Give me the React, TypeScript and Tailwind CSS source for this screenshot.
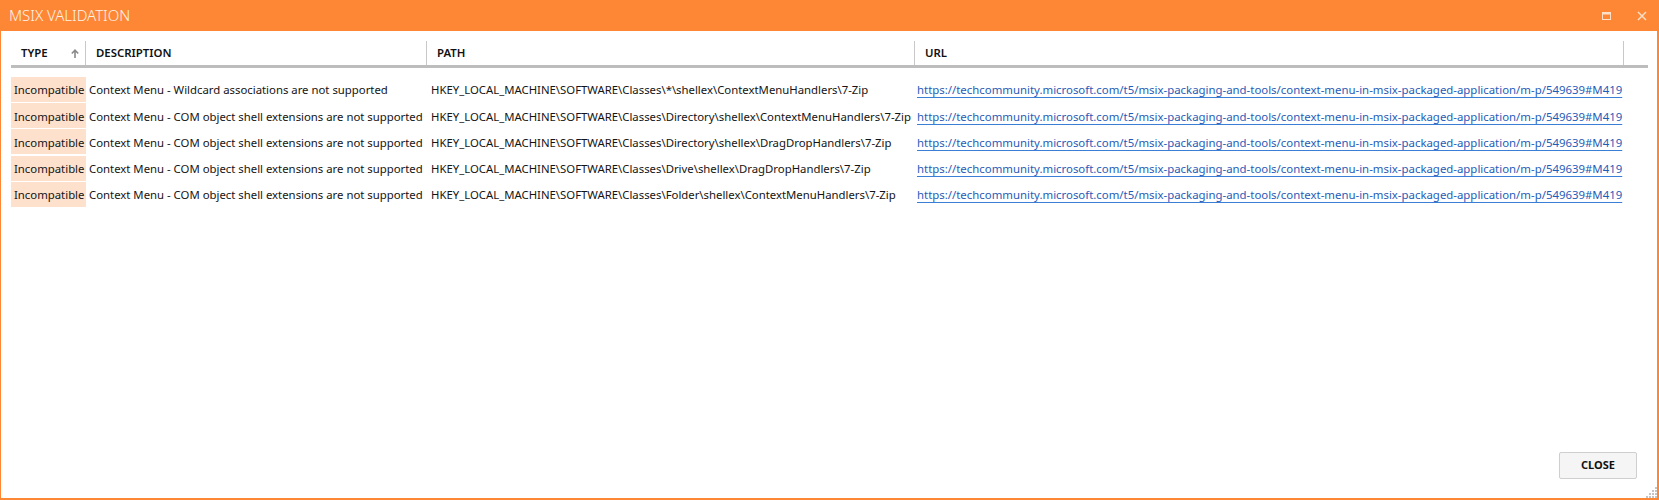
import React from "react";

const rows = [
  {
    desc: "Context Menu - Wildcard associations are not supported",
    path: "HKEY_LOCAL_MACHINE\\SOFTWARE\\Classes\\*\\shellex\\ContextMenuHandlers\\7-Zip",
  },
  {
    desc: "Context Menu - COM object shell extensions are not supported",
    path: "HKEY_LOCAL_MACHINE\\SOFTWARE\\Classes\\Directory\\shellex\\ContextMenuHandlers\\7-Zip",
  },
  {
    desc: "Context Menu - COM object shell extensions are not supported",
    path: "HKEY_LOCAL_MACHINE\\SOFTWARE\\Classes\\Directory\\shellex\\DragDropHandlers\\7-Zip",
  },
  {
    desc: "Context Menu - COM object shell extensions are not supported",
    path: "HKEY_LOCAL_MACHINE\\SOFTWARE\\Classes\\Drive\\shellex\\DragDropHandlers\\7-Zip",
  },
  {
    desc: "Context Menu - COM object shell extensions are not supported",
    path: "HKEY_LOCAL_MACHINE\\SOFTWARE\\Classes\\Folder\\shellex\\ContextMenuHandlers\\7-Zip",
  },
];

const URL =
  "https://techcommunity.microsoft.com/t5/msix-packaging-and-tools/context-menu-in-msix-packaged-application/m-p/549639#M419";

const font = { fontFamily: '"Noto Sans", "Open Sans", sans-serif' };

export default function App() {
  return (
    <div
      className="w-[1659px] h-[500px] bg-[#fd8734] flex flex-col overflow-hidden"
      style={font}
    >
      {/* Title bar */}
      <div className="h-[31px] flex items-center pl-[9px] pr-[12px] shrink-0">
        <div className="text-[15px] font-light text-[#fff2e8] leading-none">
          MSIX VALIDATION
        </div>
        <div className="flex-1" />
        <div className="flex items-center gap-[25px]">
          <svg width="10" height="9" viewBox="0 0 10 9" className="mt-[1px]">
            <rect x="0.5" y="0.5" width="8" height="7" fill="none" stroke="#fde0c8" strokeWidth="1" />
            <rect x="0.5" y="0.5" width="8" height="2" fill="#fde0c8" />
          </svg>
          <svg width="10" height="10" viewBox="0 0 10 10" className="mt-[1px]">
            <path d="M1 1 L9 9 M9 1 L1 9" stroke="#fde0c8" strokeWidth="1.5" />
          </svg>
        </div>
      </div>

      {/* Body */}
      <div className="flex-1 bg-white ml-[1px] mr-[2px] mb-[2px] flex flex-col relative">
        <div className="pl-[10px] pr-[9px] pt-[10px] flex-1 flex flex-col">
          {/* Header */}
          <div className="flex h-[24px] text-[11.4px] font-semibold text-[#111] border-b-[3px] border-[#bdbdbd] box-content">
            <div className="w-[75px] flex items-center pl-[10px] border-r border-[#c8c8c8] relative">
              <span>TYPE</span>
              <svg width="8" height="9" viewBox="0 0 8 9" className="absolute left-[60px] top-[8px]">
                <path d="M4 9 V1.5 M0.8 4.5 L4 1.2 L7.2 4.5" stroke="#8a8a8a" strokeWidth="1.6" fill="none" />
              </svg>
            </div>
            <div className="w-[341px] flex items-center pl-[10px] border-r border-[#c8c8c8]">
              DESCRIPTION
            </div>
            <div className="w-[488px] flex items-center pl-[10px] border-r border-[#c8c8c8]">
              PATH
            </div>
            <div className="w-[709px] flex items-center pl-[10px] border-r border-[#c8c8c8]">
              URL
            </div>
            <div className="flex-1" />
          </div>

          {/* Rows */}
          <div className="mt-[9px] flex flex-col text-[11.35px] text-[#141414]">
            {rows.map((r, i) => (
              <div key={i} className="flex h-[26.2px] whitespace-nowrap">
                <div className="w-[75px] h-[25px] bg-[#fde1cd] flex items-center pl-[3px] pt-[1px] overflow-hidden">
                  Incompatible
                </div>
                <div className="w-[341px] h-[25px] flex items-center pl-[3px] pt-[1px] overflow-hidden">
                  {r.desc}
                </div>
                <div className="w-[488px] h-[25px] flex items-center pl-[4px] pt-[1px] overflow-hidden">
                  {r.path}
                </div>
                <div className="w-[709px] h-[25px] flex items-center pl-[2px] pt-[1px] overflow-hidden">
                  <span className="text-[11.4px] text-[#1f5cb8] underline decoration-[#3a7fd5] underline-offset-[3px]">
                    {URL}
                  </span>
                </div>
              </div>
            ))}
          </div>
          <div className="flex-1" />
        </div>

        {/* Footer */}
        <div className="flex justify-end pr-[20px] pb-[19px]">
          <button className="w-[78px] h-[27px] bg-[#f5f5f5] border border-[#cfcfcf] rounded-[2px] text-[11px] font-bold text-[#111]">
            CLOSE
          </button>
        </div>

        {/* Resize grip */}
        <svg width="11" height="11" viewBox="0 0 11 11" className="absolute right-0 bottom-0">
          {[
            [9, 0],
            [6, 3], [9, 3],
            [3, 6], [6, 6], [9, 6],
            [0, 9], [3, 9], [6, 9], [9, 9],
          ].map(([x, y], k) => (
            <rect key={k} x={x} y={y} width="2" height="2" fill="#c4c4c4" />
          ))}
        </svg>
      </div>
    </div>
  );
}
